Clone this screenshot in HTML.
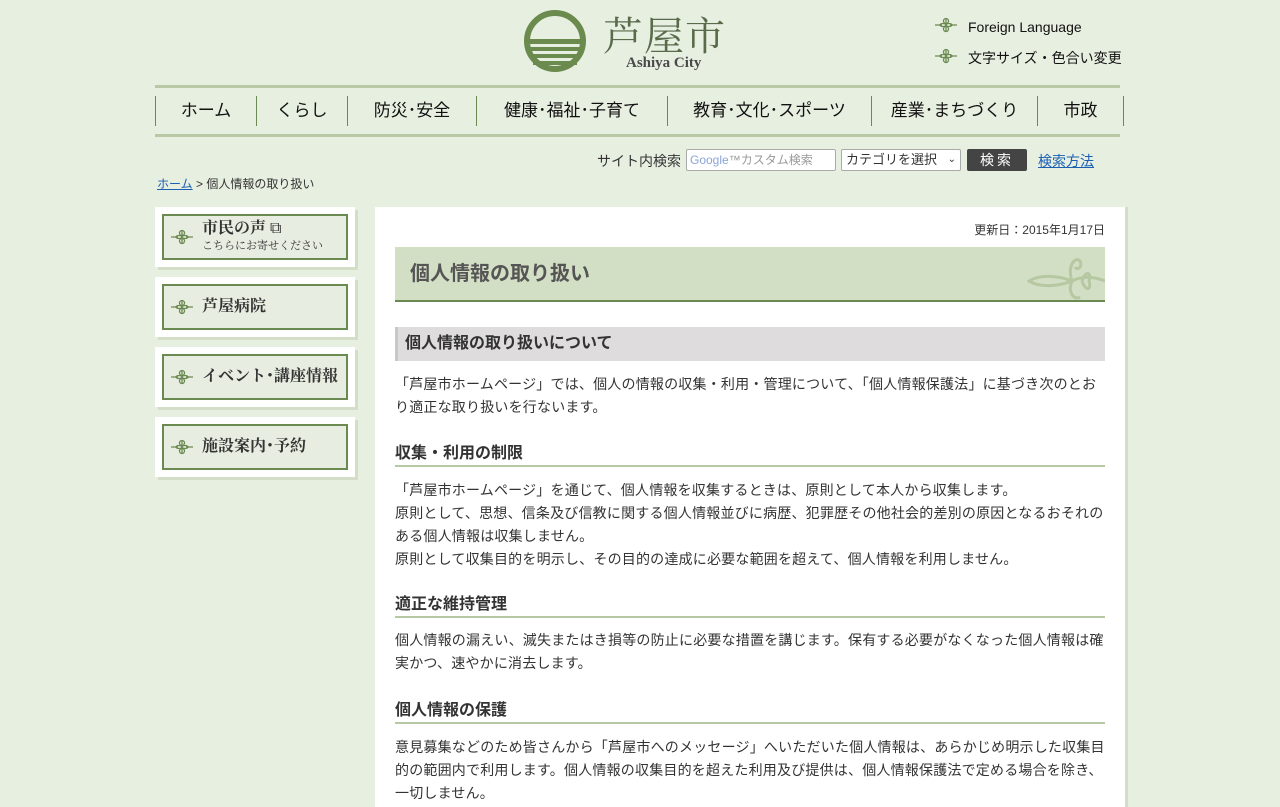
<!DOCTYPE html>
<html><head><meta charset="utf-8"><style>
*{margin:0;padding:0;box-sizing:border-box}
body{width:1280px;height:800px;overflow:hidden;background:#e7efe1;font-family:"Liberation Sans","Noto Sans CJK JP",sans-serif;color:#333;position:relative}
.abs{position:absolute}
.nav{position:absolute;top:96px;left:155px;height:30px;display:flex}
.nav div{border-left:1px solid #6b8a52;height:30px;line-height:30px;text-align:center;font-size:17px;color:#111}
.rule{position:absolute;left:155px;width:965px;height:3px;background:#b9c9a6}
.side{position:absolute;left:155px;width:200px;height:60px;background:#fff;box-shadow:3px 3px 0 #d3ddc8}
.side .in{position:absolute;left:7px;top:7px;width:186px;height:46px;border:2px solid #6b8a52;background:#e7ede0;font-weight:bold;font-size:16px;color:#333;padding-left:38px;line-height:42px;font-family:"Liberation Serif","Noto Serif CJK SC",serif}
.orn{position:absolute;left:7px;top:12px}
.main{position:absolute;left:375px;top:207px;width:750px;height:600px;background:#fff;box-shadow:3px 0 0 #d3ddc8}
p{font-size:14px;line-height:23px;color:#333;letter-spacing:0.2px}
h3{font-size:16px;font-weight:bold;color:#333;border-bottom:2px solid #b5c9a3;padding-bottom:1px;line-height:20px;position:absolute;left:20px;width:710px}
</style></head><body>
<svg width="0" height="0" style="position:absolute"><defs><g id="o" fill="none" stroke="#6b8a52" stroke-width="1.3"><path d="M0 9H7M15 9H22M11 2V16"/><circle cx="11" cy="5" r="2.5"/><circle cx="11" cy="13" r="2.5"/><ellipse cx="8" cy="9" rx="3" ry="1.5"/><ellipse cx="14" cy="9" rx="3" ry="1.5"/></g></defs></svg>
<svg class="abs" style="left:524px;top:10px" width="62" height="62" viewBox="0 0 62 62"><circle cx="31" cy="31" r="28" fill="none" stroke="#6b8a4e" stroke-width="6"/><rect x="3" y="29" width="56" height="5" fill="#6b8a4e"/><rect x="3" y="37" width="56" height="4" fill="#6b8a4e"/><rect x="5" y="44" width="52" height="4" fill="#6b8a4e"/><rect x="9" y="51" width="44" height="4" fill="#6b8a4e"/></svg>
<div class="abs" style="left:603px;top:8px;font-size:40px;letter-spacing:1px;color:#5a6b4c;font-family:'Noto Serif CJK SC',serif;line-height:52px">芦屋市</div>
<div class="abs" style="left:626px;top:55px;font-size:15px;font-weight:bold;color:#4a4a4a;font-family:'Liberation Serif',serif">Ashiya City</div>
<svg class="abs" style="left:935px;top:16px" width="24" height="18"><use href="#o"/></svg>
<div class="abs" style="left:968px;top:16px;font-size:14px;color:#111;line-height:22px">Foreign Language</div>
<svg class="abs" style="left:935px;top:47px" width="24" height="18"><use href="#o"/></svg>
<div class="abs" style="left:968px;top:47px;font-size:14px;color:#111;line-height:22px">文字サイズ・色合い変更</div>
<div class="rule" style="top:85px"></div>
<div class="nav">
<div style="width:101px">ホーム</div><div style="width:91px">くらし</div><div style="width:129px">防災･安全</div><div style="width:191px">健康･福祉･子育て</div><div style="width:204px">教育･文化･スポーツ</div><div style="width:166px">産業･まちづくり</div><div style="width:87px;border-right:1px solid #6b8a52">市政</div>
</div>
<div class="rule" style="top:134px"></div>
<div class="abs" style="left:597px;top:151px;font-size:14px;color:#333">サイト内検索</div>
<div class="abs" style="left:686px;top:149px;width:150px;height:22px;background:#fff;border:1px solid #aaa;border-radius:2px;font-size:12px;color:#999;line-height:20px;padding-left:3px"><span style="color:#8aa4d6">Google</span>™カスタム検索</div>
<div class="abs" style="left:841px;top:149px;width:120px;height:22px;background:#fff;border:1px solid #aaa;border-radius:2px;font-size:13px;line-height:20px;padding-left:4px;color:#333">カテゴリを選択 <span style="float:right;padding-right:4px;font-size:10px">⌄</span></div>
<div class="abs" style="left:967px;top:149px;width:60px;height:22px;background:#444;border-radius:2px;color:#fff;font-size:14px;line-height:22px;text-align:center;letter-spacing:3px">検索</div>
<div class="abs" style="left:1038px;top:151px;font-size:14px;color:#1a5fb4;text-decoration:underline">検索方法</div>
<div class="abs" style="left:157px;top:175px;font-size:12px;color:#333"><span style="color:#1a5fb4;text-decoration:underline">ホーム</span> &gt; 個人情報の取り扱い</div>

<div class="side" style="top:207px"><div class="in" style="line-height:20px;padding-top:3px">市民の声 <span style="font-weight:normal">⧉</span><br><span style="font-size:11px;font-weight:normal;line-height:14px;display:block">こちらにお寄せください</span><svg class="orn" width="24" height="18"><use href="#o"/></svg></div></div>
<div class="side" style="top:277px"><div class="in">芦屋病院<svg class="orn" width="24" height="18"><use href="#o"/></svg></div></div>
<div class="side" style="top:347px"><div class="in">イベント･講座情報<svg class="orn" width="24" height="18"><use href="#o"/></svg></div></div>
<div class="side" style="top:417px"><div class="in">施設案内･予約<svg class="orn" width="24" height="18"><use href="#o"/></svg></div></div>

<div class="main">
<div class="abs" style="right:20px;top:14px;font-size:12px;color:#333">更新日：2015年1月17日</div>
<div class="abs" style="left:20px;top:40px;width:710px;height:55px;background:#d3dfc5;border-bottom:2px solid #6b8a52;font-size:20px;font-weight:bold;color:#555;line-height:54px;padding-left:15px;overflow:hidden">個人情報の取り扱い
<svg class="abs" style="right:0;top:4px" width="78" height="50" viewBox="0 0 78 50"><g fill="none" stroke="#b5c8a2" stroke-width="3"><path d="M2 30 C15 22 35 26 45 30 C35 34 15 38 2 30Z"/><path d="M45 30 C40 15 48 5 53 10 C56 16 50 20 48 16"/><path d="M45 30 C40 42 48 50 53 46"/><path d="M45 30 C55 25 65 25 78 30 M55 30 C58 20 65 20 62 30 C65 40 58 40 55 30"/></g></svg></div>
<div class="abs" style="left:20px;top:120px;width:710px;height:34px;background:#dedcdc;border-left:3px solid #c8c8c8;font-size:16px;font-weight:bold;line-height:34px;padding-left:7px;color:#333">個人情報の取り扱いについて</div>
<p class="abs" style="left:20px;top:166px;width:710px">「芦屋市ホームページ」では、個人の情報の収集・利用・管理について、「個人情報保護法」に基づき次のとお<br>り適正な取り扱いを行ないます。</p>
<h3 style="top:237px">収集・利用の制限</h3>
<p class="abs" style="left:20px;top:272px;width:720px">「芦屋市ホームページ」を通じて、個人情報を収集するときは、原則として本人から収集します。<br>原則として、思想、信条及び信教に関する個人情報並びに病歴、犯罪歴その他社会的差別の原因となるおそれの<br>ある個人情報は収集しません。<br>原則として収集目的を明示し、その目的の達成に必要な範囲を超えて、個人情報を利用しません。</p>
<h3 style="top:388px">適正な維持管理</h3>
<p class="abs" style="left:20px;top:422px;width:720px">個人情報の漏えい、滅失またはき損等の防止に必要な措置を講じます。保有する必要がなくなった個人情報は確<br>実かつ、速やかに消去します。</p>
<h3 style="top:494px">個人情報の保護</h3>
<p class="abs" style="left:20px;top:529px;width:720px">意見募集などのため皆さんから「芦屋市へのメッセージ」へいただいた個人情報は、あらかじめ明示した収集目<br>的の範囲内で利用します。個人情報の収集目的を超えた利用及び提供は、個人情報保護法で定める場合を除き、<br>一切しません。</p>
</div>
</body></html>
